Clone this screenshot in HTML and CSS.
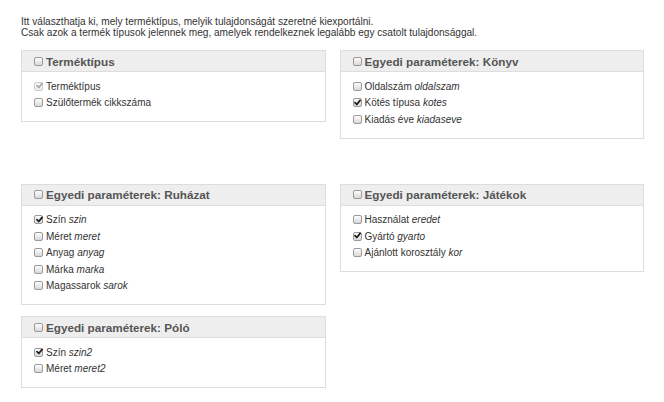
FILE: index.html
```html
<!DOCTYPE html>
<html lang="hu">
<head>
<meta charset="utf-8">
<title>Export</title>
<link rel="stylesheet" href="styles.css">
</head>
<body>
<div class="page">
  <p class="intro">Itt választhatja ki, mely terméktípus, melyik tulajdonságát szeretné kiexportálni.<br>Csak azok a termék típusok jelennek meg, amelyek rendelkeznek legalább egy csatolt tulajdonsággal.</p>

  <div class="row row-first">
    <div class="col">
      <div class="panel">
        <div class="panel-head"><span class="cb"></span><span class="title">Terméktípus</span></div>
        <div class="panel-body">
          <div class="item"><span class="cb checked disabled"><svg viewBox="0 0 10 10"><path d="M2.2 5.2 L4.2 7.2 L7.9 2.6" /></svg></span><span class="label">Terméktípus</span></div>
          <div class="item"><span class="cb"></span><span class="label">Szülőtermék cikkszáma</span></div>
        </div>
      </div>
    </div>
    <div class="col">
      <div class="panel">
        <div class="panel-head"><span class="cb"></span><span class="title">Egyedi paraméterek: Könyv</span></div>
        <div class="panel-body">
          <div class="item"><span class="cb"></span><span class="label">Oldalszám <i>oldalszam</i></span></div>
          <div class="item"><span class="cb checked"><svg viewBox="0 0 10 10"><path d="M2.2 5.2 L4.2 7.2 L7.9 2.6" /></svg></span><span class="label">Kötés típusa <i>kotes</i></span></div>
          <div class="item"><span class="cb"></span><span class="label">Kiadás éve <i>kiadaseve</i></span></div>
        </div>
      </div>
    </div>
  </div>

  <div class="row">
    <div class="col stack">
      <div class="panel">
        <div class="panel-head"><span class="cb"></span><span class="title">Egyedi paraméterek: Ruházat</span></div>
        <div class="panel-body">
          <div class="item"><span class="cb checked"><svg viewBox="0 0 10 10"><path d="M2.2 5.2 L4.2 7.2 L7.9 2.6" /></svg></span><span class="label">Szín <i>szin</i></span></div>
          <div class="item"><span class="cb"></span><span class="label">Méret <i>meret</i></span></div>
          <div class="item"><span class="cb"></span><span class="label">Anyag <i>anyag</i></span></div>
          <div class="item"><span class="cb"></span><span class="label">Márka <i>marka</i></span></div>
          <div class="item"><span class="cb"></span><span class="label">Magassarok <i>sarok</i></span></div>
        </div>
      </div>
      <div class="panel">
        <div class="panel-head"><span class="cb"></span><span class="title">Egyedi paraméterek: Póló</span></div>
        <div class="panel-body">
          <div class="item"><span class="cb checked"><svg viewBox="0 0 10 10"><path d="M2.2 5.2 L4.2 7.2 L7.9 2.6" /></svg></span><span class="label">Szín <i>szin2</i></span></div>
          <div class="item"><span class="cb"></span><span class="label">Méret <i>meret2</i></span></div>
        </div>
      </div>
    </div>
    <div class="col">
      <div class="panel">
        <div class="panel-head"><span class="cb"></span><span class="title">Egyedi paraméterek: Játékok</span></div>
        <div class="panel-body">
          <div class="item"><span class="cb"></span><span class="label">Használat <i>eredet</i></span></div>
          <div class="item"><span class="cb checked"><svg viewBox="0 0 10 10"><path d="M2.2 5.2 L4.2 7.2 L7.9 2.6" /></svg></span><span class="label">Gyártó <i>gyarto</i></span></div>
          <div class="item"><span class="cb"></span><span class="label">Ajánlott korosztály <i>kor</i></span></div>
        </div>
      </div>
    </div>
  </div>
</div>
</body>
</html>
```

FILE: styles.css
```css
html, body {
  margin: 0;
  padding: 0;
  background: #ffffff;
}

body {
  font-family: "Liberation Sans", Arial, sans-serif;
  font-size: 10px;
  color: #333333;
}

.page {
  width: 623px;
  padding: 17px 0 0 21px;
}

.intro {
  margin: 0 0 12px 0;
  line-height: 10.5px;
  font-size: 10.1px;
  color: #333;
}

.row {
  display: grid;
  grid-template-columns: 1fr 1fr;
  column-gap: 14px;
  align-items: start;
}

.row-first {
  margin-bottom: 45px;
}

.stack {
  display: flex;
  flex-direction: column;
  gap: 11px;
}

.panel {
  border: 1px solid #dddddd;
  background: #ffffff;
}

.panel-head {
  height: 20px;
  background: #eeeeee;
  border-bottom: 1px solid #dddddd;
  display: flex;
  align-items: center;
  padding-left: 12px;
}

.panel-head .cb {
  margin-right: 3px;
}

.title {
  font-weight: bold;
  font-size: 11.7px;
  color: #555555;
}

.panel-body {
  padding: 6px 0 10px 12px;
}

.item {
  height: 16.5px;
  display: flex;
  align-items: center;
}

.label {
  font-size: 10px;
  color: #333;
  white-space: nowrap;
}

.cb {
  box-sizing: border-box;
  width: 9px;
  height: 9px;
  border: 1px solid #9a9a9a;
  border-radius: 2px;
  background: linear-gradient(#fdfdfd, #d8d8d8);
  margin-right: 3px;
  flex: none;
  display: inline-block;
  position: relative;
}

.cb svg {
  position: absolute;
  left: -0.5px;
  top: -1.5px;
  width: 9px;
  height: 9px;
  overflow: visible;
}

.cb svg path {
  fill: none;
  stroke: #1a1a1a;
  stroke-width: 1.9;
  stroke-linecap: round;
  stroke-linejoin: round;
}

.cb.disabled {
  border-color: #cccccc;
  background: linear-gradient(#fafafa, #ebebeb);
}

.cb.disabled svg path {
  stroke: #aaaaaa;
}
```
